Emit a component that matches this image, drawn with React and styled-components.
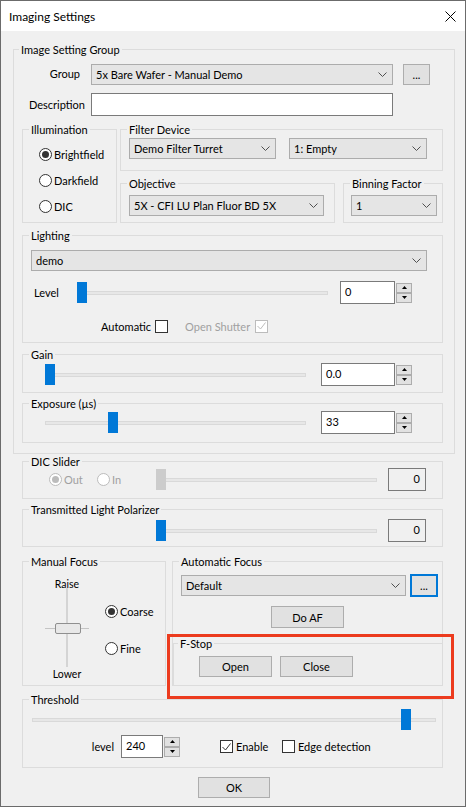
import React from 'react'
import styled, { createGlobalStyle } from 'styled-components'

const GlobalStyle = createGlobalStyle`
  html, body { margin: 0; padding: 0; background: #f0f0f0; }
  body { font-family: Lato, "Noto Sans", sans-serif; font-size: 11px; color: #000; }
  *, *::before, *::after { box-sizing: border-box; }
`

const Window = styled.div`
  position: relative;
  width: 466px;
  height: 807px;
  border: 1px solid #6b6b6b;
  display: flex;
  flex-direction: column;
  background: #f0f0f0;
`

const TitleBar = styled.div`
  height: 30px;
  flex: none;
  background: #fff;
  display: flex;
  align-items: center;
  justify-content: space-between;
  padding: 0 9px 0 8px;
  font-size: 12px;
`

const Body = styled.div`
  flex: 1;
  display: flex;
  flex-direction: column;
  padding: 11px 10px 0 12px;
`

const Group = styled.fieldset`
  flex: none;
  margin: ${p => `${p.$mt || 0}px ${p.$mr || 0}px 0 ${p.$ml || 0}px`};
  padding: ${p => p.$pt || 0}px 0 0 0;
  border: 1px solid #dcdcdc;
  min-width: 0;
  height: ${p => p.$h}px;
  ${p => (p.$w ? `width: ${p.$w}px;` : '')}
`

const Legend = styled.legend`
  margin-left: ${p => p.$ml}px;
  padding: 0 2px;
  line-height: 15px;
`

const Inner = styled.div`
  padding: 0 ${p => p.$pr || 0}px 0 ${p => p.$pl || 0}px;
`

const Row = styled.div`
  display: flex;
  align-items: ${p => p.$align || 'center'};
  justify-content: ${p => p.$justify || 'flex-start'};
  gap: ${p => p.$gap || 0}px;
  margin: ${p => `${p.$mt || 0}px 0 0 ${p.$ml || 0}px`};
  ${p => (p.$h ? `height: ${p.$h}px;` : '')}
  ${p => (p.$w ? `width: ${p.$w}px; flex: none;` : '')}
`

const Stack = styled.div`
  display: flex;
  flex-direction: column;
  width: ${p => p.$w}px;
  flex: none;
`

const Text = styled.span`
  flex: none;
  white-space: nowrap;
  line-height: 15px;
  ${p => (p.$w ? `width: ${p.$w}px;` : '')}
  margin-left: ${p => p.$ml || 0}px;
  padding-right: ${p => p.$pr || 0}px;
  padding-bottom: ${p => p.$pb || 0}px;
  text-align: ${p => p.$align || 'left'};
  color: ${p => (p.$disabled ? '#a0a0a0' : '#000')};
`

const ComboBox = styled.div`
  flex: none;
  display: flex;
  align-items: center;
  justify-content: space-between;
  width: ${p => p.$w}px;
  height: 21px;
  padding: 0 5px 0 4px;
  background: #e5e5e5;
  border: 1px solid #acacac;
  white-space: nowrap;
`

const TextBox = styled.div`
  flex: none;
  width: ${p => p.$w}px;
  height: ${p => p.$h}px;
  background: ${p => (p.$readonly ? '#f0f0f0' : '#fff')};
  border: 1px solid #7a7a7a;
  padding: 0 ${p => (p.$right ? 5 : 4)}px 2px;
  display: flex;
  align-items: center;
  justify-content: ${p => (p.$right ? 'flex-end' : 'flex-start')};
  margin-left: ${p => p.$ml || 0}px;
`

const Button = styled.div`
  flex: none;
  width: ${p => p.$w}px;
  height: ${p => p.$h}px;
  margin: ${p => `${p.$mt || 0}px 0 0 ${p.$ml || 0}px`};
  display: flex;
  align-items: center;
  justify-content: center;
  background: #e1e1e1;
  border: ${p => (p.$focus ? '2px solid #0078d7' : '1px solid #adadad')};
  align-self: ${p => p.$self || 'auto'};
`

const RadioList = styled.div`
  display: flex;
  flex-direction: column;
  gap: ${p => p.$gap}px;
  margin: ${p => `${p.$mt || 0}px 0 0 ${p.$ml || 0}px`};
`

const Option = styled.label`
  display: flex;
  align-items: center;
  height: 16px;
  flex: none;
  ${p => (p.$w ? `width: ${p.$w}px;` : '')}
  margin-left: ${p => p.$ml || 0}px;
  color: ${p => (p.$disabled ? '#a0a0a0' : '#000')};
`

const RadioCircle = styled.span`
  width: 13px;
  height: 13px;
  flex: none;
  margin-right: 2px;
  border-radius: 50%;
  border: 1px solid ${p => (p.$disabled ? '#bcbcbc' : '#333')};
  background: #fff;
  display: flex;
  align-items: center;
  justify-content: center;
  &::after {
    content: '';
    display: ${p => (p.$checked ? 'block' : 'none')};
    width: 7px;
    height: 7px;
    border-radius: 50%;
    background: ${p => (p.$disabled ? '#bcbcbc' : '#333')};
  }
`

const CheckSquare = styled.span`
  width: 13px;
  height: 13px;
  flex: none;
  margin-left: ${p => p.$ml || 0}px;
  margin-right: ${p => p.$mr || 0}px;
  border: 1px solid ${p => (p.$disabled ? '#bcbcbc' : '#333')};
  background: #fff;
  display: flex;
  align-items: center;
  justify-content: center;
`

const SliderTrack = styled.div`
  position: relative;
  flex: none;
  width: ${p => p.$w}px;
  height: 21px;
  &::before {
    content: '';
    position: absolute;
    left: ${p => (p.$inset ?? 0)}px;
    right: 0;
    top: 9px;
    height: 4px;
    background: #e7e7e7;
    border: 1px solid #d9d9d9;
  }
`

const SliderThumb = styled.span`
  position: absolute;
  top: 0;
  left: ${p => p.$x}px;
  width: 10px;
  height: 21px;
  background: ${p => (p.$disabled ? '#cccccc' : '#0078d7')};
`

const SpinWrap = styled.div`
  display: flex;
  align-items: center;
  flex: none;
  margin-left: ${p => p.$ml || 0}px;
`

const SpinButtons = styled.div`
  display: flex;
  flex-direction: column;
  margin-left: 1px;
`

const SpinBtn = styled.span`
  width: 16px;
  height: 10px;
  background: #e1e1e1;
  border: 1px solid #adadad;
  display: flex;
  align-items: center;
  justify-content: center;
`

const VSlider = styled.div`
  display: flex;
  flex-direction: column;
  align-items: center;
  width: 50px;
  flex: none;
  margin-left: 19px;
`

const VLabel = styled.span`
  font-size: 10.5px;
  line-height: 14px;
`

const VTrack = styled.div`
  position: relative;
  width: 50px;
  height: 76px;
  &::before {
    content: '';
    position: absolute;
    left: 24px;
    width: 2px;
    top: -3px;
    bottom: 0;
    background: #d4d4d4;
  }
  &::after {
    content: '';
    position: absolute;
    left: 3px;
    width: 44px;
    top: 37px;
    height: 1px;
    background: #c4c4c4;
  }
`

const VThumb = styled.span`
  position: absolute;
  z-index: 1;
  left: 13px;
  top: 32px;
  width: 26px;
  height: 11px;
  border: 1px solid #8f8f8f;
  border-radius: 2px;
  background: #e8e8e8;
`

const Highlight = styled.div`
  position: absolute;
  left: 166px;
  top: 633px;
  width: 287px;
  height: 65px;
  border: 3px solid #ec3b1e;
  pointer-events: none;
`

function Box({ title, w, h, mt, ml, mr, pt, pl, pr, legendMl = 6, children }) {
  return (
    <Group $w={w} $h={h} $mt={mt} $ml={ml} $mr={mr} $pt={pt}>
      <Legend $ml={legendMl}>{title}</Legend>
      <Inner $pl={pl} $pr={pr}>{children}</Inner>
    </Group>
  )
}

function Chevron() {
  return (
    <svg width="9" height="5" viewBox="0 0 9 5">
      <polyline points="0.5,0.5 4.5,4.5 8.5,0.5" fill="none" stroke="#505050" strokeWidth="1" />
    </svg>
  )
}

function Combo({ w, children }) {
  return (
    <ComboBox $w={w}>
      <span>{children}</span>
      <Chevron />
    </ComboBox>
  )
}

function Radio({ checked, disabled, w, ml, children }) {
  return (
    <Option $disabled={disabled} $w={w} $ml={ml}>
      <RadioCircle $checked={checked} $disabled={disabled} />
      {children}
    </Option>
  )
}

function Check({ checked, disabled, ml, mr }) {
  const color = disabled ? '#bcbcbc' : '#333'
  return (
    <CheckSquare $disabled={disabled} $ml={ml} $mr={mr}>
      {checked && (
        <svg width="9" height="8" viewBox="0 0 9 8">
          <polyline points="0.5,4 3.5,7 8.5,0.5" fill="none" stroke={color} strokeWidth="1" />
        </svg>
      )}
    </CheckSquare>
  )
}

function Slider({ w, x = 0, inset, disabled }) {
  return (
    <SliderTrack $w={w} $inset={inset}>
      <SliderThumb $x={x} $disabled={disabled} />
    </SliderTrack>
  )
}

function Spin({ w, h = 23, ml, value }) {
  return (
    <SpinWrap $ml={ml}>
      <TextBox $w={w} $h={h}>{value}</TextBox>
      <SpinButtons>
        <SpinBtn>
          <svg width="5" height="3" viewBox="0 0 5 3"><polygon points="0,3 2.5,0 5,3" fill="#000" /></svg>
        </SpinBtn>
        <SpinBtn>
          <svg width="5" height="3" viewBox="0 0 5 3"><polygon points="0,0 2.5,3 5,0" fill="#000" /></svg>
        </SpinBtn>
      </SpinButtons>
    </SpinWrap>
  )
}

export default function App() {
  return (
    <>
      <GlobalStyle />
      <Window>
        <TitleBar>
          <span>Imaging Settings</span>
          <svg width="11" height="11" viewBox="0 0 11 11">
            <path d="M0.5 0.5 L10.5 10.5 M10.5 0.5 L0.5 10.5" stroke="#000" strokeWidth="1" />
          </svg>
        </TitleBar>
        <Body>
          <Box title="Image Setting Group" w={442} h={412} pl={8} pr={11} legendMl={5}>
            <Row $mt={7} $h={21}>
              <Text $w={69} $pr={11} $pb={3} $align="right">Group</Text>
              <Combo w={302}>5x Bare Wafer - Manual Demo</Combo>
              <Button $w={27} $h={21} $ml={10} $mt={-1}>...</Button>
            </Row>
            <Row $mt={8} $h={23}>
              <Text $w={69} $pr={6} $align="right">Description</Text>
              <TextBox $w={302} $h={23} />
            </Row>
            <Row $mt={6} $align="flex-start" $gap={3}>
              <Box title="Illumination" w={95} h={101} pt={9} pl={16}>
                <RadioList $gap={10}>
                  <Radio checked>Brightfield</Radio>
                  <Radio>Darkfield</Radio>
                  <Radio>DIC</Radio>
                </RadioList>
              </Box>
              <Stack $w={323}>
                <Box title="Filter Device" h={49} pt={1} pl={8}>
                  <Row $gap={13}>
                    <Combo w={147}>Demo Filter Turret</Combo>
                    <Combo w={138}>1: Empty</Combo>
                  </Row>
                </Box>
                <Row $mt={5} $gap={8}>
                  <Box title="Objective" w={215} h={47} pt={4} pl={8}>
                    <Combo w={195}>5X - CFI LU Plan Fluor BD 5X</Combo>
                  </Box>
                  <Box title="Binning Factor" w={100} h={47} pt={4} pl={7}>
                    <Combo w={86}>1</Combo>
                  </Box>
                </Row>
              </Stack>
            </Row>
            <Box title="Lighting" mt={5} h={115} pt={7} pl={8}>
              <Combo w={396}>demo</Combo>
              <Row $mt={10} $h={23}>
                <Text $w={43} $ml={3}>Level</Text>
                <Slider w={251} inset={1} />
                <Spin ml={12} w={55} value="0" />
              </Row>
              <Row $mt={14} $h={16}>
                <Text $ml={70}>Automatic</Text>
                <Check ml={4} />
                <Text $ml={17} $disabled>Open Shutter</Text>
                <Check ml={5} checked disabled />
              </Row>
            </Box>
            <Box title="Gain" mt={4} h={46} pt={1} pl={22}>
              <Row $h={23}>
                <Slider w={261} />
                <Spin ml={15} w={74} value="0.0" />
              </Row>
            </Box>
            <Box title="Exposure (µs)" mt={3} h={47} pl={22}>
              <Row $h={23}>
                <Slider w={261} x={63} />
                <Spin ml={15} w={74} value="33" />
              </Row>
            </Box>
          </Box>

          <Box title="DIC Slider" w={421} ml={9} h={45} pl={26}>
            <Row $mt={-1} $h={23}>
              <Row $h={16} $w={107}>
                <Radio checked disabled w={48}>Out</Radio>
                <Radio disabled>In</Radio>
              </Row>
              <Slider w={221} disabled />
              <TextBox $w={38} $h={23} $ml={11} $readonly $right>0</TextBox>
            </Row>
          </Box>

          <Box title="Transmitted Light Polarizer" w={421} ml={9} mt={3} h={45} pt={2} pl={133}>
            <Row $h={23}>
              <Slider w={221} />
              <TextBox $w={38} $h={23} $ml={11} $readonly $right>0</TextBox>
            </Row>
          </Box>

          <Row $mt={7} $ml={9} $align="flex-start" $gap={6}>
            <Box title="Manual Focus" w={144} h={132} pt={8}>
              <Row $align="flex-start">
                <VSlider>
                  <VLabel>Raise</VLabel>
                  <VTrack>
                    <VThumb />
                  </VTrack>
                  <VLabel>Lower</VLabel>
                </VSlider>
                <RadioList $ml={13} $mt={26} $gap={21}>
                  <Radio checked>Coarse</Radio>
                  <Radio>Fine</Radio>
                </RadioList>
              </Row>
            </Box>
            <Box title="Automatic Focus" w={271} h={132} pt={5}>
              <Row $ml={8} $h={23}>
                <Combo w={225}>Default</Combo>
                <Button $w={28} $h={23} $ml={4} $focus>...</Button>
              </Row>
              <Row $mt={9} $justify="center">
                <Button $w={73} $h={22}>Do AF</Button>
              </Row>
              <Box title="F-Stop" mt={8} mr={-1} h={50} pt={5} pl={25} legendMl={4}>
                <Row $gap={8}>
                  <Button $w={73} $h={21}>Open</Button>
                  <Button $w={73} $h={21}>Close</Button>
                </Row>
              </Box>
            </Box>
          </Row>

          <Box title="Threshold" w={421} ml={9} mt={6} h={76} pt={2} pl={9}>
            <Slider w={404} x={369} />
            <Row $mt={5} $h={23}>
              <Text $w={89} $pr={7} $align="right">level</Text>
              <Spin w={42} value="240" />
              <Option $w={62} $ml={40}>
                <Check checked mr={3} />
                Enable
              </Option>
              <Option>
                <Check mr={3} />
                Edge detection
              </Option>
            </Row>
          </Box>

          <Button $w={72} $h={21} $mt={9} $self="center">OK</Button>
        </Body>
        <Highlight />
      </Window>
    </>
  )
}
